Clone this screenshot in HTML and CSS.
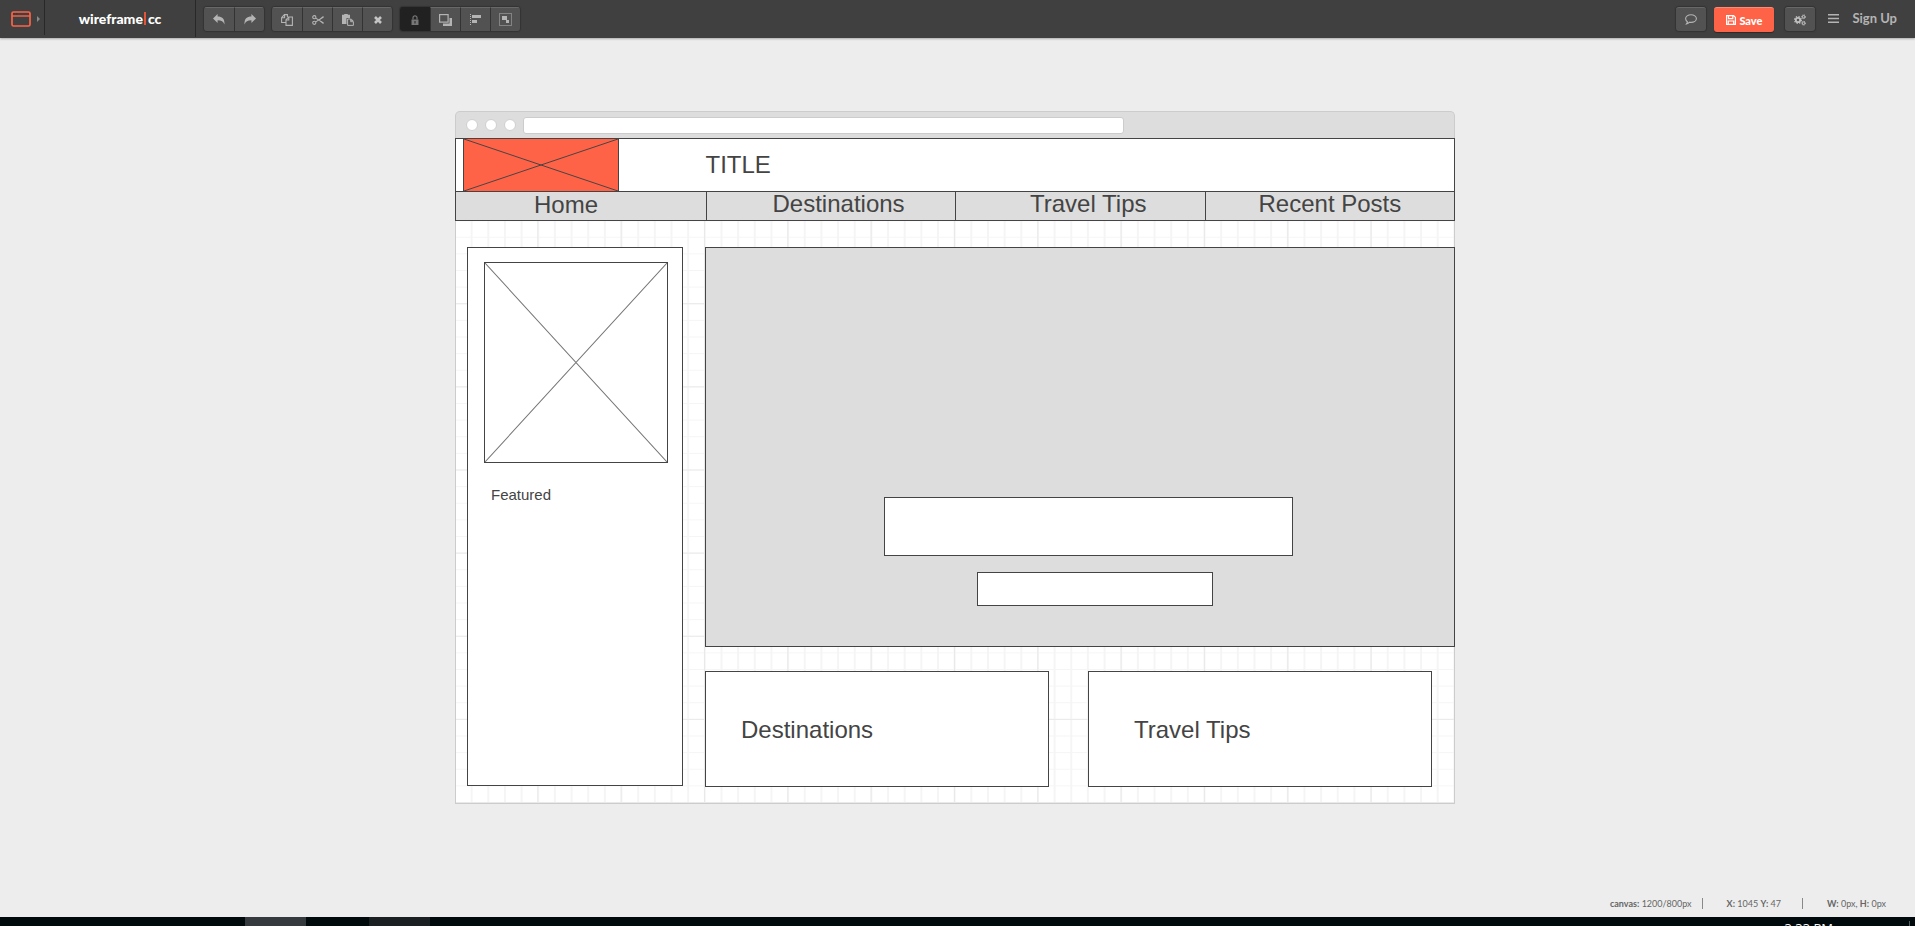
FILE: index.html
```
<!DOCTYPE html>
<html lang="en">
<head>
<meta charset="utf-8">
<title>wireframe.cc</title>
<link rel="stylesheet" href="styles.css">
</head>
<body>
<header class="topbar">
  <button class="device" aria-label="Device">
    <svg width="20" height="16" viewBox="0 0 20 16"><rect x="1" y="1" width="18" height="14" rx="1.5" fill="none" stroke="#ff6347" stroke-width="1.7"/><path d="M1 5h18" stroke="#ff6347" stroke-width="1.4"/><path d="M2.5 2.8h1.2M5 2.8h1.2" stroke="#333"/></svg>
    <svg width="3" height="6" viewBox="0 0 3 6"><path d="M0 0l3 3-3 3z" fill="#8a8a8a"/></svg>
  </button>
  <a class="brand" href="#">wireframe<span class="bar"></span>cc</a>
  <nav class="tools" aria-label="Tools">
    <div class="group">
      <button aria-label="Undo"><svg width="12" height="11" viewBox="0 0 12 11"><path d="M4.6 0v2.5C9 2.5 11.8 4.300 11.500 10.500 10.400 7.400 8.400 6.300 4.600 6.300V9L0 4.500z"/></svg></button>
      <button aria-label="Redo"><svg width="12" height="11" viewBox="0 0 12 11"><path d="M7.400 0v2.500C3 2.500.2 4.300.5 10.500 1.600 7.400 3.600 6.300 7.400 6.300V9L12 4.500z"/></svg></button>
    </div>
    <div class="group">
      <button aria-label="Copy"><svg class="line" width="12" height="12" viewBox="0 0 12 12"><path d="M5 8.500H.6V3.700L3.400.6H6.400V3M3.600.8v3H.8M5 5.800L7.600 3H11.400V11.400H5zM7.800 3.200V6H5.200"/></svg></button>
      <button aria-label="Cut"><svg class="line" width="12" height="10" viewBox="0 0 12 10"><circle cx="2.300" cy="2.200" r="1.600"/><circle cx="2.300" cy="7.800" r="1.600"/><path d="M3.700 3.100L11.500 8M3.700 6.900L11.500 2M7 5l4.500-3.500M7 5l4.500 3.500"/></svg></button>
      <button aria-label="Paste"><svg width="12" height="12" viewBox="0 0 12 12"><path d="M0 .8h2.200V0h3.600v.8H8V4H4.500v6H0z"/><path d="M5.600 5h3.100v2.700h2.700v3.700H5.600z" fill="none" stroke="#b4b4b4"/><path d="M9.200 4.600l2.700 2.600H9.200z"/></svg></button>
      <button aria-label="Delete"><svg width="8" height="8" viewBox="0 0 8 8"><path d="M1 1l6 6M7 1L1 7" stroke="#c4c4c4" stroke-width="2.600"/></svg></button>
    </div>
    <div class="group">
      <button class="on" aria-label="Lock"><svg width="8" height="10" viewBox="0 0 8 10"><path d="M.5 4.500h7V10h-7z" fill="#777"/><path d="M2 4.500V2.800a2 2 0 0 1 4 0v1.700" fill="none" stroke="#777" stroke-width="1.200"/><path d="M4 6v2.500" stroke="#222"/></svg></button>
      <button aria-label="Arrange"><svg width="13" height="12" viewBox="0 0 13 12"><rect x=".6" y=".6" width="8.500" height="7.500" fill="none" stroke="#b4b4b4" stroke-width="1.200"/><path d="M10.500 4H13v8H4V9.500h6.500z"/></svg></button>
      <button aria-label="Align"><svg width="11" height="11" viewBox="0 0 11 11"><path d="M.5 0v11" stroke="#b4b4b4" stroke-dasharray="1 1"/><path d="M2 1h9v3H2zM2 6h5v3H2z"/></svg></button>
      <button aria-label="Group"><svg width="13" height="13" viewBox="0 0 13 13"><rect x=".5" y=".5" width="12" height="12" fill="none" stroke="#b4b4b4" stroke-dasharray="1 1"/><path d="M3 3h5v4H3zM7 7h3v3H7z"/></svg></button>
    </div>
  </nav>
  <div class="account">
    <button class="single" aria-label="Comments"><svg class="line" width="12" height="11" viewBox="0 0 12 11"><path d="M6 .8C9 .8 11.400 2.500 11.400 4.600S9 8.400 6 8.400c-.6 0-1-.1-1.500-.2C3.500 9.300 2.500 9.700 1.500 9.900c.5-.7.9-1.300.9-2.200C1.300 7 .6 5.900.6 4.600.6 2.500 3 .8 6 .8z"/></svg></button>
    <button class="save"><svg width="10" height="10" viewBox="0 0 10 10"><path d="M.6.6h7l1.800 1.800v7H.6zM2.500.6v3h4.300v-3M2.300 9.400V6h5.400v3.400" fill="none" stroke="#fff" stroke-width="1.200"/></svg>Save</button>
    <button class="single" aria-label="Settings"><svg width="12" height="12" viewBox="0 0 12 12"><g fill="none" stroke="#c0c0c0"><circle cx="4" cy="6" r="2.200" stroke-width="1.800"/><circle cx="4" cy="6" r="3.400" stroke-width="1.200" stroke-dasharray="1.400 1.270"/><circle cx="9.600" cy="2.800" r="1.200"/><circle cx="9.600" cy="2.800" r="1.900" stroke-dasharray="1 .7"/><circle cx="9.600" cy="9.200" r="1.200"/><circle cx="9.600" cy="9.200" r="1.900" stroke-dasharray="1 .7"/></g></svg></button>
    <button class="menu" aria-label="Menu"><svg width="11" height="9" viewBox="0 0 11 9"><path d="M0 0h11v1.500H0zM0 3.700h11v1.500H0zM0 7.400h11v1.500H0z"/></svg></button>
    <a class="signup" href="#">Sign Up</a>
  </div>
</header>

<main class="workspace">
  <div class="browser">
    <div class="chrome"><i class="dot"></i><i class="dot"></i><i class="dot"></i><span class="address"></span></div>
    <div class="canvas">
      <div class="banner">
        <svg class="logo" viewBox="0 0 100 100" preserveAspectRatio="none"><path d="M0 0L100 100M100 0L0 100"/></svg>
        <h1>TITLE</h1>
      </div>
      <ul class="nav">
        <li class="home">Home</li>
        <li class="dest">Destinations</li>
        <li class="tips">Travel Tips</li>
        <li class="posts">Recent Posts</li>
      </ul>
      <div class="content">
        <aside class="box side">
          <svg class="photo" viewBox="0 0 100 100" preserveAspectRatio="none"><path d="M0 0L100 100M100 0L0 100"/></svg>
          <p>Featured</p>
        </aside>
        <section class="right">
          <div class="box hero">
            <div class="box wide"></div>
            <div class="box narrow"></div>
          </div>
          <div class="cards">
            <div class="box card">Destinations</div>
            <div class="box card second">Travel Tips</div>
          </div>
        </section>
      </div>
    </div>
  </div>
</main>

<footer class="status">
  <span><b>canvas:</b> 1200/800px</span>
  <span class="pos"><b>X:</b> 1045 <b>Y:</b> 47</span>
  <span class="size"><b>W:</b> 0px, <b>H:</b> 0px</span>
</footer>
<div class="taskbar"><span class="task"></span><span class="task dim"></span><time>3:33 PM</time></div>
</body>
</html>
```
FILE: styles.css
```
* { box-sizing: border-box; }
body {
  margin: 0;
  height: 100vh;
  display: flex;
  flex-direction: column;
  overflow: hidden;
  background: #ededed;
  color: #444;
  font-family: "Liberation Sans", Arial, sans-serif;
}
button {
  margin: 0;
  padding: 0;
  border: 0;
  background: none;
  display: flex;
  align-items: center;
  justify-content: center;
}
svg { display: block; fill: #b4b4b4; }
.line { fill: none; stroke: #b4b4b4; stroke-width: 1.1; }

.topbar {
  flex: none;
  display: flex;
  height: 38px;
  background: #404040;
  box-shadow: 0 1px 2px #aaa;
  font-family: Lato, sans-serif;
}
.device {
  width: 45px;
  height: 35px;
  padding: 3px 0 0 6px;
  gap: 6px;
  border-right: 1px solid #282828;
}
.brand {
  width: 151px;
  height: 37px;
  display: flex;
  align-items: center;
  justify-content: center;
  border-right: 1px solid #282828;
  color: #fff;
  font-size: 14px;
  font-weight: 900;
  text-decoration: none;
}
.bar { width: 2px; height: 13px; margin: 0 2px 0 1px; background: #e2553d; }
.tools { display: flex; gap: 8px; padding: 7px 0 0 8px; }
.group {
  display: flex;
  height: 24px;
  border-radius: 3px;
  overflow: hidden;
  box-shadow: 0 0 1px 1px #333;
}
.group button, .single {
  width: 30px;
  height: 24px;
  background: #525252;
  border-top: 1px solid #686868;
}
.group button + button { border-left: 1px solid #333; }
.group .on { background: #212121; border-top-color: #212121; }
.account { display: flex; margin-left: auto; padding: 7px 18px 0 0; }
.single { border-radius: 3px; box-shadow: 0 0 1px 1px #333; }
.save {
  width: 60px;
  height: 25px;
  margin: 0 11px 0 8px;
  gap: 3px;
  border-radius: 3px;
  border-top: 1px solid #ff8a74;
  background: #ff6347;
  box-shadow: 0 1px 1px #2a2a2a;
  color: #fff;
  font: 900 11px Lato, sans-serif;
}
.menu { width: 11px; height: 23px; margin: 0 13px; }
.signup {
  line-height: 22px;
  color: #b4b4b4;
  font-size: 13px;
  font-weight: 700;
  text-decoration: none;
}

.workspace { flex: 1; padding: 73px 5px 0 0; }
.browser {
  width: 100%;
  max-width: 1000px;
  margin: 0 auto;
}
.chrome {
  display: flex;
  align-items: center;
  gap: 7px;
  height: 27px;
  padding-left: 10px;
  border: 1px solid #ccc;
  border-bottom: 0;
  border-radius: 5px 5px 0 0;
  background: #ddd;
}
.dot {
  width: 12px;
  height: 12px;
  border: 1px solid #d0d0d0;
  border-radius: 50%;
  background: #fff;
}
.address {
  width: 601px;
  height: 17px;
  border: 1px solid #ccc;
  border-radius: 3px;
  background: #fff;
}
.canvas {
  --minor: #f5f5f5;
  --major: #e9e9e9;
  padding-bottom: 16px;
  border-bottom: 1px solid #ccc;
  box-shadow: inset 1px 0 #ccc, inset -1px 0 #ccc;
  background-color: #fff;
  background-image:
    linear-gradient(90deg, var(--major) 1px, transparent 1px),
    linear-gradient(var(--major) 1px, transparent 1px),
    linear-gradient(90deg, var(--minor) 2px, transparent 2px),
    linear-gradient(var(--minor) 1px, transparent 1px);
  background-position: -1px -1px;
  background-size:
    calc(100% / 12) 100%,
    100% calc(100% / 8),
    calc(100% / 60) 100%,
    100% calc(100% / 40);
}
.banner {
  display: grid;
  grid-template-columns: 25% 1fr;
  align-items: center;
  height: 54px;
  border: 1px solid #444;
  background: #fff;
}
.logo {
  width: 156px;
  height: 54px;
  margin: -1px 0 -1px 7px;
  border: 1px solid #444;
  background: #ff6347;
}
.logo path, .photo path {
  fill: none;
  stroke: #444;
  stroke-width: 1px;
  vector-effect: non-scaling-stroke;
}
.photo path { stroke: #777; }
h1 { margin: 0; font-size: 24px; font-weight: 400; }
.nav {
  display: grid;
  grid-template-columns: repeat(4, 1fr);
  height: 29px;
  margin: 0;
  padding: 0;
  border: 1px solid #444;
  border-top: 0;
  background: #ddd;
  list-style: none;
  font-size: 24px;
  line-height: 24px;
}
.nav li + li { border-left: 1px solid #444; }
.nav .home { padding-left: 78px; line-height: 26px; }
.dest { padding-left: 66px; }
.tips { padding-left: 74px; }
.posts { padding-left: 53px; }
.box { border: 1px solid #444; background: #fff; }
.content {
  display: grid;
  grid-template-columns: 216px 750px;
  justify-content: space-between;
  align-items: start;
  padding: 26px 0 0 12px;
}
.side { height: 539px; padding: 14px 14px 0 16px; }
.photo { width: 100%; height: 201px; border: 1px solid #444; }
.side p { margin: 23px 0 0 7px; font-size: 15px; line-height: 18px; }
.hero {
  display: flex;
  flex-direction: column;
  align-items: center;
  gap: 16px;
  height: 400px;
  padding: 249px 0 0 16px;
  background: #ddd;
}
.wide { width: 409px; height: 59px; }
.narrow { width: 236px; height: 34px; margin-left: 14px; }
.cards {
  display: grid;
  grid-template-columns: 1fr 1fr;
  gap: 39px;
  padding: 24px 23px 0 0;
}
.card {
  height: 116px;
  padding: 44px 0 0 35px;
  font-size: 24px;
  line-height: 28px;
}
.second { padding-left: 45px; }

.status {
  display: flex;
  justify-content: flex-end;
  padding: 0 29px 7px 0;
  color: #666;
  font-family: Lato, sans-serif;
  font-size: 9px;
  line-height: 12px;
}
.pos, .size { position: relative; }
.pos { margin: 0 46px 0 35px; }
.pos::before, .size::before {
  content: "";
  position: absolute;
  left: -25px;
  top: 0;
  height: 11px;
  border-left: 1px solid #888;
}
.taskbar {
  flex: none;
  display: flex;
  height: 9px;
  padding-left: 245px;
  background: #00090c;
  overflow: hidden;
}
.task { width: 61px; margin-right: 63px; background: #343a3e; }
.dim { background: #1a1f22; }
time {
  margin: 4px 5px 0 auto;
  padding-right: 76px;
  border-right: 1px solid #555c60;
  color: #fff;
  font: 13px/14px "Open Sans", sans-serif;
}
```
